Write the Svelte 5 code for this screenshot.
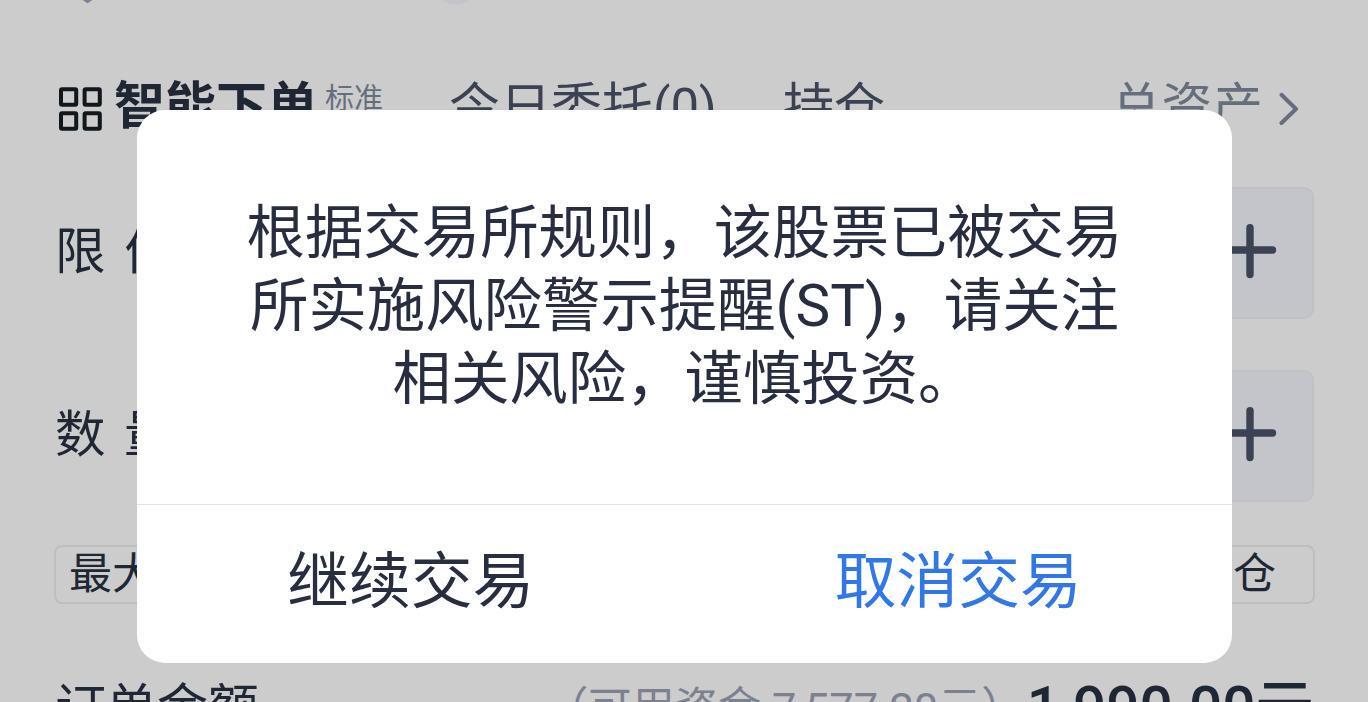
<script lang="ts">
  const tabs = ['今日委托(0)', '持仓'];
  const fields = ['限价', '数量'];
  const message = ['根据交易所规则，该股票已被交易', '所实施风险警示提醒(ST)，请关注', '相关风险，谨慎投资。'];
</script>

<main class="screen">
  <div class="top">
    <svg class="peek" width="460" height="6" viewBox="0 0 460 6">
      <path d="M24 -4L31.5 1.4L39 -4" fill="none" stroke="#7d8190" stroke-width="3.4" stroke-linejoin="round" />
      <circle cx="400" cy="-20" r="24.5" fill="#c4c5c9" />
    </svg>
  </div>

  <header class="head">
    <svg class="grid" width="44" height="44" viewBox="0 0 44 44" fill="none" stroke="#11171b" stroke-width="4">
      <rect x="3" y="2.3" width="15.2" height="15.4" rx="1" />
      <rect x="26.6" y="2.3" width="15.2" height="15.4" rx="1" />
      <rect x="3" y="26.3" width="15.2" height="15.4" rx="1" />
      <rect x="26.6" y="26.3" width="15.2" height="15.4" rx="1" />
    </svg>
    <h1>智能下单</h1>
    <span class="mode">标准</span>
    <nav>
      {#each tabs as tab}<span>{tab}</span>{/each}
    </nav>
    <span class="assets">总资产</span>
    <svg class="chevron" width="20" height="34" viewBox="0 0 20 34" fill="none" stroke="#666e7e" stroke-width="4" stroke-linecap="round" stroke-linejoin="round">
      <path d="M2.5 2.8L17 17L2.5 31" />
    </svg>
  </header>

  <section class="fields">
    {#each fields as field}
      <div class="field">
        <span class="label">{field}</span>
        <button class="plus" aria-label="+">
          <svg width="56" height="56" viewBox="0 0 56 56" stroke="#3b4254" stroke-width="7.4" stroke-linecap="round">
            <path d="M28 4.6V51.6M5 27H50.5" />
          </svg>
        </button>
      </div>
    {/each}
  </section>

  <section class="quick">
    <span class="chip">最大</span>
    <span class="chip last">仓</span>
  </section>

  <footer>
    <span class="name">订单金额</span>
    <span class="funds">（可用资金 7,577.20元）</span>
    <strong>1,990.00元</strong>
  </footer>

  <div class="dialog" role="dialog">
    <div class="message">
      {#each message as line}<div>{line}</div>{/each}
    </div>
    <div class="actions">
      <button>继续交易</button>
      <button class="cancel">取消交易</button>
    </div>
  </div>
</main>

<style>
  :global(body) { margin: 0; background: #ccc; }
  * { box-sizing: border-box; }
  .screen {
    position: relative;
    width: 1368px;
    height: 702px;
    overflow: hidden;
    background: #ccc;
    color: #1f2735;
    font-family: Roboto, "Noto Sans CJK SC", sans-serif;
    white-space: nowrap;
  }
  button { border: 0; background: none; padding: 0; font: inherit; color: inherit; }
  svg { display: block; flex: none; }
  .top { height: 70px; padding-left: 56px; }
  .head { display: flex; height: 78px; padding: 0 69px 0 58px; align-items: flex-start; }
  .grid { margin-top: 17px; }
  h1 { margin: 0 0 0 12px; width: 211px; font-size: 51px; font-weight: 700; line-height: 74px; }
  .mode { width: 124px; font-size: 29px; line-height: 59px; color: #666e7e; }
  nav { display: flex; gap: 66px; font-size: 51px; line-height: 76px; color: #3b4254; }
  .assets { margin-left: auto; font-size: 50.7px; line-height: 75px; color: #666e7e; }
  .chevron { margin: 22px 0 0 16px; }
  .fields { display: flex; flex-direction: column; gap: 51px; padding: 39px 54px 0 55px; }
  .field { display: flex; height: 132px; align-items: center; justify-content: space-between; }
  .label { font-size: 50.5px; letter-spacing: 18.5px; line-height: 74px; margin-top: -2px; }
  .plus {
    display: flex;
    width: 140px;
    height: 132px;
    padding: 0 0 4px 46px;
    align-items: center;
    border: 2px solid #c0c1c4;
    border-radius: 10px;
    background: #c4c5ca;
  }
  .quick { display: flex; justify-content: space-between; padding: 43px 53px 0 54px; }
  .chip {
    display: block;
    width: 230px;
    height: 59px;
    padding-left: 13px;
    border: 2px solid #bdbec2;
    border-radius: 8px;
    font-size: 43px;
    line-height: 55px;
  }
  .chip.last { padding: 0 37px 0 0; text-align: right; }
  footer { display: flex; padding: 68px 54px 0 55px; align-items: flex-start; line-height: 74px; }
  .name { font-size: 51px; }
  .funds { margin-left: auto; font-size: 43.3px; color: #7c8190; }
  strong { margin-left: 2px; font-size: 58.5px; font-weight: 500; line-height: 72px; }
  .dialog {
    position: absolute;
    left: 137px;
    top: 110px;
    display: flex;
    flex-direction: column;
    width: 1095px;
    height: 552.5px;
    border-radius: 28px;
    background: #fff;
    color: #282e3f;
  }
  .message { height: 394px; padding-top: 87px; font-size: 58.4px; line-height: 73px; text-align: center; }
  .actions { display: flex; flex: 1; border-top: 1px solid #e4e4e6; }
  .actions button { flex: 1; padding-bottom: 4px; font-size: 61.8px; line-height: 80px; }
  .actions .cancel { color: #3277e6; }
</style>
